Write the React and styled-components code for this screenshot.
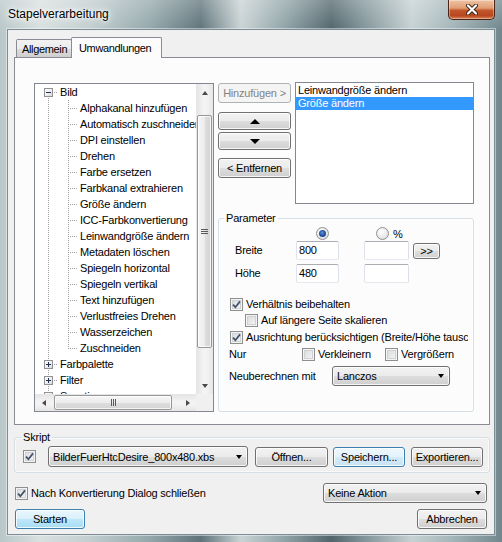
import React from 'react';
import styled, { createGlobalStyle, css } from 'styled-components';

const GlobalStyle = createGlobalStyle`
  html, body { margin: 0; padding: 0; }
  body {
    font-family: "Liberation Sans", Arial, sans-serif;
    font-size: 11px;
    letter-spacing: -0.2px;
    color: #000;
    background: #8a9ea3;
  }
  *, *::before, *::after { box-sizing: border-box; }
`;

const Window = styled.div`
  width: 502px;
  height: 542px;
  display: flex;
  flex-direction: column;
  overflow: hidden;
  background:
    linear-gradient(180deg, rgba(255,255,255,0.25) 0px, rgba(255,255,255,0) 30px),
    linear-gradient(90deg, #b9c7c9 0%, #d9e0e0 8%, #c2cecf 18%, #93a7ab 30%, #5e737a 40%, #c9d3d4 48%, #8ea2a6 57%, #52656c 66%, #7d9196 72%, #c6d1d2 82%, #a4b6b9 90%, #70878d 100%);
`;

const TitleBar = styled.div`
  flex: none;
  height: 29px;
  display: flex;
  justify-content: space-between;
  align-items: flex-start;
  padding: 0 7px 0 8px;
`;

const TitleText = styled.div`
  font-size: 12px;
  letter-spacing: 0;
  line-height: 29px;
  color: #000;
  text-shadow: 0 0 6px #fff, 0 0 10px rgba(255,255,255,0.9), 0 0 3px #fff;
`;

const CloseButton = styled.div`
  width: 47px;
  height: 20px;
  border: 1px solid #4a2416;
  border-top: none;
  border-radius: 0 0 5px 5px;
  background: linear-gradient(180deg, #efc4a2 0%, #df9f76 42%, #c3562b 55%, #b8481f 82%, #d98352 100%);
  box-shadow: inset 0 0 0 1px rgba(255,255,255,0.35);
  display: flex;
  align-items: center;
  justify-content: center;
`;

const Client = styled.div`
  flex: 1;
  margin: 0 7px 7px;
  background: #f0f0f0;
  border: 1px solid #7b8c95;
  box-shadow: 0 0 0 1px rgba(255,255,255,0.45);
  padding: 7px 4px 5px 6px;
  display: flex;
  flex-direction: column;
`;

const TabStrip = styled.div`
  flex: none;
  height: 20px;
  display: flex;
  align-items: flex-end;
  padding-left: 2px;
  position: relative;
  z-index: 1;
`;

const Tab = styled.div`
  width: ${p => p.$w}px;
  height: ${p => (p.$active ? 21 : 18)}px;
  margin-bottom: ${p => (p.$active ? -1 : 0)}px;
  margin-left: ${p => (p.$active ? -1 : 0)}px;
  padding-left: ${p => (p.$active ? 7 : 5)}px;
  display: flex;
  align-items: center;
  white-space: nowrap;
  letter-spacing: -0.35px;
  overflow: hidden;
  border: 1px solid #898c95;
  border-bottom: none;
  border-radius: 2px 2px 0 0;
  background: ${p => (p.$active
    ? '#fcfcfc'
    : 'linear-gradient(180deg, #f2f2f2 0%, #ebebeb 50%, #dddddd 51%, #cfcfcf 100%)')};
`;

const TabPanel = styled.div`
  flex: none;
  height: 368px;
  background: #fcfcfc;
  border: 1px solid #898c95;
  padding: 24px 15px 12px 19px;
  display: grid;
  grid-template-columns: 180px 73px 179px;
  grid-template-rows: 122px 200px;
  column-gap: 4px;
  row-gap: 8px;
`;

/* ---------- tree ---------- */

const TreeBox = styled.div`
  grid-row: 1 / span 2;
  margin-top: 1px;
  border: 1px solid #828790;
  background: #fff;
  display: grid;
  grid-template-columns: 1fr 17px;
  grid-template-rows: 1fr 17px;
  overflow: hidden;
  min-height: 0;
`;

const TreeContent = styled.div`
  overflow: hidden;
  padding-left: 3px;
  white-space: nowrap;
`;

const TreeRow = styled.div`
  display: flex;
  align-items: center;
  height: 16px;
`;

const dotV = 'repeating-linear-gradient(to bottom, #a0a0a0 0 1px, transparent 1px 2px)';
const dotH = 'repeating-linear-gradient(to right, #a0a0a0 0 1px, transparent 1px 2px)';

const lineLayers = ({ $v, $h }) => {
  const imgs = [];
  const sizes = [];
  const pos = [];
  if ($v === 'full') { imgs.push(dotV); sizes.push('1px 16px'); pos.push('10px 0'); }
  if ($v === 'top') { imgs.push(dotV); sizes.push('1px 8px'); pos.push('10px 0'); }
  if ($v === 'bottom') { imgs.push(dotV); sizes.push('1px 8px'); pos.push('10px 8px'); }
  if ($h) { imgs.push(dotH); sizes.push('10px 1px'); pos.push('10px 8px'); }
  if (!imgs.length) return '';
  return css`
    background-image: ${imgs.join(', ')};
    background-size: ${sizes.join(', ')};
    background-position: ${pos.join(', ')};
  `;
};

const Indent = styled.span`
  flex: none;
  width: 20px;
  height: 16px;
  display: flex;
  align-items: flex-start;
  background-repeat: no-repeat;
  ${lineLayers}
`;

const Expander = styled.span`
  width: 9px;
  height: 9px;
  margin: 4px 0 0 6px;
  border: 1px solid #919191;
  background: linear-gradient(135deg, #ffffff 0%, #f0f0f0 50%, #d8d8d8 100%);
  display: grid;
  place-items: center;
  &::before {
    content: '';
    grid-area: 1 / 1;
    width: 5px;
    height: 1px;
    background: #23334f;
  }
  &::after {
    content: '';
    grid-area: 1 / 1;
    width: 1px;
    height: 5px;
    background: #23334f;
    display: ${p => (p.$open ? 'none' : 'block')};
  }
`;

const TreeLabel = styled.span`
  margin-left: 1px;
  padding: 0 1px;
  line-height: 16px;
`;

/* ---------- scrollbars ---------- */

const Tri = styled.span`
  flex: none;
  width: 0;
  height: 0;
  border-style: solid;
  ${({ $dir, $s = 4, $c = '#000' }) => {
    const h = Math.round($s);
    if ($dir === 'up') return css`border-width: 0 ${$s}px ${h}px ${$s}px; border-color: transparent transparent ${$c} transparent;`;
    if ($dir === 'down') return css`border-width: ${h}px ${$s}px 0 ${$s}px; border-color: ${$c} transparent transparent transparent;`;
    if ($dir === 'left') return css`border-width: ${$s}px ${h}px ${$s}px 0; border-color: transparent ${$c} transparent transparent;`;
    return css`border-width: ${$s}px 0 ${$s}px ${h}px; border-color: transparent transparent transparent ${$c};`;
  }}
`;

const ScrollBar = styled.div`
  display: flex;
  flex-direction: ${p => (p.$vertical ? 'column' : 'row')};
  background: ${p => (p.$vertical
    ? 'linear-gradient(to right, #e4e4e4, #f3f3f3 45%, #f3f3f3 60%, #e6e6e6)'
    : 'linear-gradient(to bottom, #e4e4e4, #f3f3f3 45%, #f3f3f3 60%, #e6e6e6)')};
  min-width: 0;
  min-height: 0;
`;

const ScrollArrow = styled.div`
  flex: none;
  width: 17px;
  height: 17px;
  display: flex;
  align-items: center;
  justify-content: center;
`;

const ScrollTrack = styled.div`
  flex: 1;
  min-width: 0;
  min-height: 0;
  display: flex;
  flex-direction: ${p => (p.$vertical ? 'column' : 'row')};
  padding: ${p => (p.$vertical ? '14px 1px 0 1px' : '1px 0 1px 2px')};
`;

const ScrollThumb = styled.div`
  flex: none;
  ${p => (p.$vertical ? css`height: ${p.$len}px;` : css`width: ${p.$len}px;`)}
  border: 1px solid #979797;
  border-radius: 2px;
  background: ${p => (p.$vertical
    ? 'linear-gradient(to right, #f6f6f6, #ececec 50%, #dedede 51%, #d4d4d4)'
    : 'linear-gradient(to bottom, #f6f6f6, #ececec 50%, #dedede 51%, #d4d4d4)')};
  box-shadow: inset 0 0 0 1px rgba(255,255,255,0.75);
  display: flex;
  align-items: center;
  justify-content: center;
`;

const Grip = styled.span`
  width: ${p => (p.$vertical ? 7 : 5)}px;
  height: ${p => (p.$vertical ? 5 : 7)}px;
  background: ${p => (p.$vertical
    ? 'repeating-linear-gradient(to bottom, #5a5a5a 0 1px, transparent 1px 2px)'
    : 'repeating-linear-gradient(to right, #5a5a5a 0 1px, transparent 1px 2px)')};
`;

const ScrollCorner = styled.div`
  background: #f0f0f0;
`;

/* ---------- buttons & fields ---------- */

const Btn = styled.div`
  flex: none;
  width: ${p => (p.$w ? `${p.$w}px` : 'auto')};
  height: ${p => p.$h || 20}px;
  border: 1px solid #707070;
  border-radius: 3px;
  background: linear-gradient(180deg, #f2f2f2 0%, #ebebeb 50%, #dddddd 51%, #cfcfcf 100%);
  box-shadow: inset 0 0 0 1px rgba(255,255,255,0.8);
  display: flex;
  align-items: center;
  justify-content: center;
  white-space: nowrap;
  ${p => p.$variant === 'disabled' && css`
    border-color: #adb2b5;
    background: #f4f4f4;
    color: #838383;
    box-shadow: none;
  `}
  ${p => p.$variant === 'focus' && css`
    border-color: #3c7fb1;
    background: linear-gradient(180deg, #eef7fd 0%, #e4f2fb 50%, #d5eaf7 51%, #c8e3f5 100%);
  `}
  ${p => p.$variant === 'default' && css`
    border-color: #3c7fb1;
    background: linear-gradient(180deg, #eaf6fd 0%, #d9f0fb 48%, #bde6f8 52%, #a7ddf4 100%);
  `}
`;

const Combo = styled.div`
  flex: none;
  width: ${p => p.$w}px;
  max-width: ${p => p.$w}px;
  height: ${p => p.$h || 20}px;
  border: 1px solid #707070;
  border-radius: 3px;
  background: linear-gradient(180deg, #f2f2f2 0%, #ebebeb 50%, #dddddd 51%, #cfcfcf 100%);
  box-shadow: inset 0 0 0 1px rgba(255,255,255,0.8);
  display: flex;
  align-items: center;
  justify-content: space-between;
  padding: 0 5px 0 4px;
  white-space: nowrap;
  overflow: hidden;
`;

const TextField = styled.div`
  width: ${p => p.$w}px;
  height: 19px;
  border: 1px solid;
  border-color: #abadb3 #dbdfe6 #e3e9ef #e2e3ea;
  border-radius: 2px;
  background: #fff;
  padding-left: 2px;
  line-height: 17px;
`;

const Check = styled.span`
  flex: none;
  width: 13px;
  height: 13px;
  border: 1px solid #8e8f8f;
  background: linear-gradient(135deg, #d6d8da 0%, #f8f8f8 100%);
  box-shadow: inset 0 0 0 1px #f4f4f4, inset 0 0 0 2px #cfd1d3;
  display: flex;
  align-items: center;
  justify-content: center;
`;

const Radio = styled.span`
  flex: none;
  width: 13px;
  height: 13px;
  border-radius: 50%;
  border: 1px solid #8e8f8f;
  background: radial-gradient(circle at 40% 35%, #ffffff 0%, #f0f0f0 40%, #d4d4d4 100%);
  display: flex;
  align-items: center;
  justify-content: center;
  &::after {
    content: '';
    width: 7px;
    height: 7px;
    border-radius: 50%;
    background: radial-gradient(circle at 45% 40%, #5d93d8 0%, #1f4d9c 55%, #183c7c 100%);
    display: ${p => (p.$checked ? 'block' : 'none')};
  }
`;

const CheckMark = () => (
  <svg width="9" height="9" viewBox="0 0 9 9">
    <path d="M1 4.6 L3.4 7.2 L8 1.4" fill="none" stroke="#41516b" strokeWidth="1.7" />
  </svg>
);

const CheckBox = ({ checked }) => <Check>{checked && <CheckMark />}</Check>;

/* ---------- middle column / list ---------- */

const MoveColumn = styled.div`
  margin-top: 1px;
  display: flex;
  flex-direction: column;
`;

const Spacer = styled.div`
  flex: none;
  height: ${p => p.$h}px;
`;

const ListBox = styled.div`
  border: 1px solid #828790;
  background: #fff;
  padding: 1px 0;
  overflow: hidden;
`;

const ListItem = styled.div`
  height: 13px;
  line-height: 13px;
  padding: 0 2px;
  white-space: nowrap;
  background: ${p => (p.$selected ? '#3399ff' : 'transparent')};
  color: ${p => (p.$selected ? '#fff' : '#000')};
`;

/* ---------- group boxes ---------- */

const GroupBox = styled.fieldset`
  margin: 0;
  min-width: 0;
  border: 1px solid #d5dfe5;
  border-radius: 3px;
  box-shadow: inset 0 0 0 1px rgba(255,255,255,0.6);
`;

const ParamGroup = styled(GroupBox)`
  grid-column: 2 / span 2;
  height: 200px;
  padding: 1px 5px 0 10px;
  overflow: hidden;
`;

const ScriptGroup = styled(GroupBox)`
  flex: none;
  margin-top: 6px;
  padding: 2px 6px 5px 8px;
`;

const Legend = styled.legend`
  padding: 0 2px;
  margin-left: ${p => p.$ml || 0}px;
  line-height: 13px;
`;

const ParamGrid = styled.div`
  display: grid;
  grid-template-columns: 67px 68px 49px 27px;
  grid-template-rows: 15px 23px 19px;
  align-items: start;
`;

const RadioCell = styled.div`
  height: 15px;
  display: flex;
  align-items: center;
  gap: 4px;
  padding-left: ${p => p.$pl}px;
`;

const FieldLabel = styled.div`
  height: 19px;
  line-height: 19px;
  padding-left: 6px;
`;

const SmallBtn = styled(Btn)`
  margin-top: 2px;
`;

const CheckRow = styled.div`
  display: flex;
  align-items: center;
  gap: 3px;
  height: 16px;
  margin-top: ${p => p.$mt || 0}px;
  padding-left: ${p => p.$indent || 1}px;
  white-space: nowrap;
  overflow: hidden;
  min-width: 0;
`;

const OnlyRow = styled.div`
  display: grid;
  grid-template-columns: 73px 83px 1fr;
  align-items: center;
  height: 16px;
  margin-top: 1px;
  white-space: nowrap;
`;

const InlineCheck = styled.div`
  display: flex;
  align-items: center;
  gap: 3px;
`;

const ResampleRow = styled.div`
  display: flex;
  align-items: center;
  height: 20px;
  margin-top: 4px;
  white-space: nowrap;
`;

const RowLabel = styled.span`
  flex: none;
  width: ${p => p.$w}px;
`;

/* ---------- bottom area ---------- */

const ScriptRow = styled.div`
  display: flex;
  align-items: center;
  height: 21px;
`;

const Gap = styled.span`
  flex: none;
  width: ${p => p.$w}px;
`;

const BottomRow = styled.div`
  flex: none;
  height: 20px;
  margin-top: ${p => p.$mt}px;
  display: flex;
  align-items: center;
  justify-content: space-between;
  padding: 0 3px 0 1px;
`;

const CheckLabel = styled.div`
  display: flex;
  align-items: center;
  gap: 3px;
  white-space: nowrap;
`;

/* ---------- data ---------- */

const imageOps = [
  'Alphakanal hinzufügen', 'Automatisch zuschneiden', 'DPI einstellen', 'Drehen',
  'Farbe ersetzen', 'Farbkanal extrahieren', 'Größe ändern', 'ICC-Farbkonvertierung',
  'Leinwandgröße ändern', 'Metadaten löschen', 'Spiegeln horizontal', 'Spiegeln vertikal',
  'Text hinzufügen', 'Verlustfreies Drehen', 'Wasserzeichen', 'Zuschneiden',
];

const rootAfter = [
  { label: 'Farbpalette', v: 'full' },
  { label: 'Filter', v: 'full' },
  { label: 'Sonstiges', v: 'top' },
];

function Tree() {
  return (
    <TreeBox>
      <TreeContent>
        <TreeRow>
          <Indent $v="bottom" $h><Expander $open /></Indent>
          <TreeLabel>Bild</TreeLabel>
        </TreeRow>
        {imageOps.map((op, i) => (
          <TreeRow key={op}>
            <Indent $v="full" />
            <Indent $v={i === imageOps.length - 1 ? 'top' : 'full'} $h />
            <TreeLabel>{op}</TreeLabel>
          </TreeRow>
        ))}
        {rootAfter.map(n => (
          <TreeRow key={n.label}>
            <Indent $v={n.v} $h><Expander /></Indent>
            <TreeLabel>{n.label}</TreeLabel>
          </TreeRow>
        ))}
      </TreeContent>
      <ScrollBar $vertical>
        <ScrollArrow><Tri $dir="up" $s={3.5} $c="#4a4a4a" /></ScrollArrow>
        <ScrollTrack $vertical>
          <ScrollThumb $vertical $len={233}><Grip $vertical /></ScrollThumb>
        </ScrollTrack>
        <ScrollArrow><Tri $dir="down" $s={3.5} $c="#4a4a4a" /></ScrollArrow>
      </ScrollBar>
      <ScrollBar>
        <ScrollArrow><Tri $dir="left" $s={3.5} $c="#4a4a4a" /></ScrollArrow>
        <ScrollTrack>
          <ScrollThumb $len={118}><Grip /></ScrollThumb>
        </ScrollTrack>
        <ScrollArrow><Tri $dir="right" $s={3.5} $c="#4a4a4a" /></ScrollArrow>
      </ScrollBar>
      <ScrollCorner />
    </TreeBox>
  );
}

export default function App() {
  return (
    <>
      <GlobalStyle />
      <Window>
        <TitleBar>
          <TitleText>Stapelverarbeitung</TitleText>
          <CloseButton>
            <svg width="14" height="11" viewBox="0 0 14 11">
              <path d="M3 1.5 L11 9.5 M11 1.5 L3 9.5" stroke="#3a2418" strokeWidth="4" strokeLinecap="round" />
              <path d="M3 1.5 L11 9.5 M11 1.5 L3 9.5" stroke="#ffffff" strokeWidth="2.2" strokeLinecap="round" />
            </svg>
          </CloseButton>
        </TitleBar>

        <Client>
          <TabStrip>
            <Tab $w={56}>Allgemein</Tab>
            <Tab $w={91} $active>Umwandlungen</Tab>
          </TabStrip>

          <TabPanel>
            <Tree />

            <MoveColumn>
              <Btn $variant="disabled">Hinzufügen &gt;</Btn>
              <Spacer $h={9} />
              <Btn $h={18}><Tri $dir="up" $s={5} /></Btn>
              <Spacer $h={2} />
              <Btn $h={18}><Tri $dir="down" $s={5} /></Btn>
              <Spacer $h={8} />
              <Btn>&lt; Entfernen</Btn>
            </MoveColumn>

            <ListBox>
              <ListItem>Leinwandgröße ändern</ListItem>
              <ListItem $selected>Größe ändern</ListItem>
            </ListBox>

            <ParamGroup>
              <Legend $ml={-5}>Parameter</Legend>
              <ParamGrid>
                <div />
                <RadioCell $pl={20}><Radio $checked /></RadioCell>
                <RadioCell $pl={12}><Radio /><span>%</span></RadioCell>
                <div />

                <FieldLabel>Breite</FieldLabel>
                <TextField $w={43}>800</TextField>
                <TextField $w={45} />
                <SmallBtn $w={27} $h={16}>&gt;&gt;</SmallBtn>

                <FieldLabel>Höhe</FieldLabel>
                <TextField $w={43}>480</TextField>
                <TextField $w={45} />
                <div />
              </ParamGrid>

              <CheckRow $mt={13}>
                <CheckBox checked />
                <span>Verhältnis beibehalten</span>
              </CheckRow>
              <CheckRow $indent={16}>
                <CheckBox />
                <span>Auf längere Seite skalieren</span>
              </CheckRow>
              <CheckRow $mt={1}>
                <CheckBox checked />
                <span>Ausrichtung berücksichtigen (Breite/Höhe tauschen)</span>
              </CheckRow>
              <OnlyRow>
                <span>Nur</span>
                <InlineCheck><CheckBox /><span>Verkleinern</span></InlineCheck>
                <InlineCheck><CheckBox /><span>Vergrößern</span></InlineCheck>
              </OnlyRow>
              <ResampleRow>
                <RowLabel $w={103}>Neuberechnen mit</RowLabel>
                <Combo $w={118}>
                  <span>Lanczos</span>
                  <Tri $dir="down" $s={3.5} />
                </Combo>
              </ResampleRow>
            </ParamGroup>
          </TabPanel>

          <ScriptGroup>
            <Legend $ml={-2}>Skript</Legend>
            <ScriptRow>
              <CheckBox checked />
              <Gap $w={12} />
              <Combo $w={200} $h={21}>
                <span>BilderFuerHtcDesire_800x480.xbs</span>
                <Tri $dir="down" $s={3.5} />
              </Combo>
              <Gap $w={7} />
              <Btn $w={73}>Öffnen...</Btn>
              <Gap $w={5} />
              <Btn $w={72} $variant="focus">Speichern...</Btn>
              <Gap $w={6} />
              <Btn $w={72}>Exportieren...</Btn>
            </ScriptRow>
          </ScriptGroup>

          <BottomRow $mt={10}>
            <CheckLabel>
              <CheckBox checked />
              <span>Nach Konvertierung Dialog schließen</span>
            </CheckLabel>
            <Combo $w={164}>
              <span>Keine Aktion</span>
              <Tri $dir="down" $s={3.5} />
            </Combo>
          </BottomRow>

          <BottomRow $mt={6}>
            <Btn $w={70} $variant="default">Starten</Btn>
            <Btn $w={70}>Abbrechen</Btn>
          </BottomRow>
        </Client>
      </Window>
    </>
  );
}
